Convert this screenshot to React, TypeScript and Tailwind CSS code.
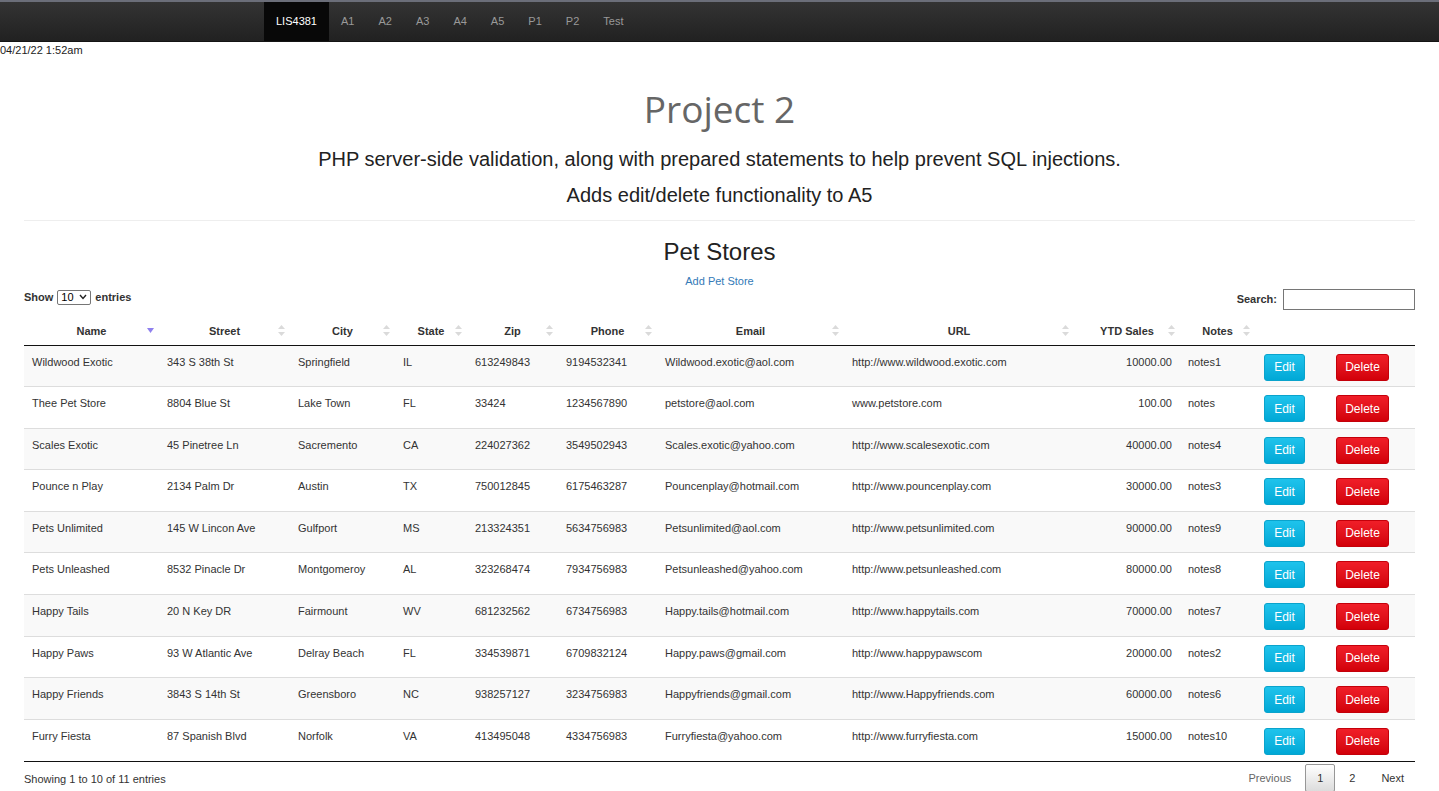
import React from 'react';

type Store = {
  name: string;
  street: string;
  city: string;
  state: string;
  zip: string;
  phone: string;
  email: string;
  url: string;
  ytd: string;
  notes: string;
};

const STORES: Store[] = [
  { name: 'Wildwood Exotic', street: '343 S 38th St', city: 'Springfield', state: 'IL', zip: '613249843', phone: '9194532341', email: 'Wildwood.exotic@aol.com', url: 'http://www.wildwood.exotic.com', ytd: '10000.00', notes: 'notes1' },
  { name: 'Thee Pet Store', street: '8804 Blue St', city: 'Lake Town', state: 'FL', zip: '33424', phone: '1234567890', email: 'petstore@aol.com', url: 'www.petstore.com', ytd: '100.00', notes: 'notes' },
  { name: 'Scales Exotic', street: '45 Pinetree Ln', city: 'Sacremento', state: 'CA', zip: '224027362', phone: '3549502943', email: 'Scales.exotic@yahoo.com', url: 'http://www.scalesexotic.com', ytd: '40000.00', notes: 'notes4' },
  { name: 'Pounce n Play', street: '2134 Palm Dr', city: 'Austin', state: 'TX', zip: '750012845', phone: '6175463287', email: 'Pouncenplay@hotmail.com', url: 'http://www.pouncenplay.com', ytd: '30000.00', notes: 'notes3' },
  { name: 'Pets Unlimited', street: '145 W Lincon Ave', city: 'Gulfport', state: 'MS', zip: '213324351', phone: '5634756983', email: 'Petsunlimited@aol.com', url: 'http://www.petsunlimited.com', ytd: '90000.00', notes: 'notes9' },
  { name: 'Pets Unleashed', street: '8532 Pinacle Dr', city: 'Montgomeroy', state: 'AL', zip: '323268474', phone: '7934756983', email: 'Petsunleashed@yahoo.com', url: 'http://www.petsunleashed.com', ytd: '80000.00', notes: 'notes8' },
  { name: 'Happy Tails', street: '20 N Key DR', city: 'Fairmount', state: 'WV', zip: '681232562', phone: '6734756983', email: 'Happy.tails@hotmail.com', url: 'http://www.happytails.com', ytd: '70000.00', notes: 'notes7' },
  { name: 'Happy Paws', street: '93 W Atlantic Ave', city: 'Delray Beach', state: 'FL', zip: '334539871', phone: '6709832124', email: 'Happy.paws@gmail.com', url: 'http://www.happypawscom', ytd: '20000.00', notes: 'notes2' },
  { name: 'Happy Friends', street: '3843 S 14th St', city: 'Greensboro', state: 'NC', zip: '938257127', phone: '3234756983', email: 'Happyfriends@gmail.com', url: 'http://www.Happyfriends.com', ytd: '60000.00', notes: 'notes6' },
  { name: 'Furry Fiesta', street: '87 Spanish Blvd', city: 'Norfolk', state: 'VA', zip: '413495048', phone: '4334756983', email: 'Furryfiesta@yahoo.com', url: 'http://www.furryfiesta.com', ytd: '15000.00', notes: 'notes10' },
];

const NAV = ['A1', 'A2', 'A3', 'A4', 'A5', 'P1', 'P2', 'Test'];

const COLS = [
  { label: 'Name', w: 'w-[135px]' },
  { label: 'Street', w: 'w-[131px]' },
  { label: 'City', w: 'w-[105px]' },
  { label: 'State', w: 'w-[72px]' },
  { label: 'Zip', w: 'w-[91px]' },
  { label: 'Phone', w: 'w-[99px]' },
  { label: 'Email', w: 'w-[187px]' },
  { label: 'URL', w: 'w-[230px]' },
  { label: 'YTD Sales', w: 'w-[106px]' },
  { label: 'Notes', w: 'w-[75px]' },
];

const SortBoth = () => (
  <svg width="7" height="11" viewBox="0 0 7 11" className="absolute right-[5px] top-[8px]">
    <path d="M3.5 0 L7 4 L0 4 Z" fill="#dadada" />
    <path d="M0 7 L7 7 L3.5 11 Z" fill="#dadada" />
  </svg>
);

const SortDesc = () => (
  <svg width="7" height="5" viewBox="0 0 7 5" className="absolute right-[5px] top-[11px]">
    <path d="M0 0 L7 0 L3.5 5 Z" fill="#8f80ee" />
  </svg>
);

export default function App() {
  return (
    <div className="min-h-screen bg-white text-[#333] font-['Liberation_Sans',Arial,sans-serif]">
      {/* navbar */}
      <div className="h-[42px] border-t-2 border-[#6b6e79] bg-gradient-to-b from-[#343434] to-[#212121] border-b border-b-[#141414] flex pl-[264px]">
        <div className="h-full px-3 flex items-center bg-[#080808] text-white text-[11px]">LIS4381</div>
        {NAV.map((n) => (
          <div key={n} className="h-full px-3 flex items-center text-[#999] text-[11px]">
            {n}
          </div>
        ))}
      </div>

      <div className="pt-[1px] text-[11px] leading-[14px] text-[#222]">04/21/22 1:52am</div>

      <div className="px-6">
        <h1 className="mt-[30px] text-center text-[37px] leading-[44px] text-[#666] font-['Open_Sans',sans-serif]">
          Project 2
        </h1>
        <h4 className="mt-[16px] text-center text-[20px] leading-[24px] text-[#222]">
          PHP server-side validation, along with prepared statements to help prevent SQL injections.
        </h4>
        <h4 className="mt-[12px] text-center text-[20px] leading-[24px] text-[#222]">
          Adds edit/delete functionality to A5
        </h4>
        <hr className="mt-[13px] border-0 border-t border-[#eeeeee]" />

        <h2 className="mt-[16px] text-center text-[24px] leading-[30px] text-[#222]">Pet Stores</h2>
        <div className="mt-[7px] text-center text-[11px] leading-[14px] text-[#337ab7]">Add Pet Store</div>

        {/* controls */}
        <div className="flex justify-between items-start h-[22px]">
          <div className="mt-[1px] flex items-center gap-1 text-[11px] font-bold text-[#333]">
            <span>Show</span>
            <span className="w-[34px] h-[15px] px-[3px] border border-[#767676] rounded-[2px] flex items-center justify-between font-normal text-[11px] text-black">
              10
              <svg width="8" height="6" viewBox="0 0 8 6">
                <path d="M1 1 L4 4.5 L7 1" stroke="#222" strokeWidth="1.4" fill="none" />
              </svg>
            </span>
            <span>entries</span>
          </div>
          <div className="flex items-center gap-[6px] mt-[1px]">
            <span className="text-[11px] font-bold text-[#333]">Search:</span>
            <div className="w-[132px] h-[21px] border border-[#767676] bg-white" />
          </div>
        </div>

        {/* table */}
        <table className="mt-[7px] w-full table-fixed border-collapse text-[11px]">
          <colgroup>
            {COLS.map((c) => (
              <col key={c.label} className={c.w} />
            ))}
            <col className="w-[73px]" />
            <col className="w-[87px]" />
          </colgroup>
          <thead>
            <tr className="h-[28px] border-b border-[#111]">
              {COLS.map((c, i) => (
                <th key={c.label} className="relative px-[18px] font-bold text-center text-[#333] whitespace-nowrap">
                  {c.label}
                  {i === 0 ? <SortDesc /> : <SortBoth />}
                </th>
              ))}
              <th />
              <th />
            </tr>
          </thead>
          <tbody>
            {STORES.map((s, i) => (
              <tr
                key={s.name}
                className={`h-[41.6px] ${i > 0 ? 'border-t border-[#dddddd]' : ''} ${i % 2 === 0 ? 'bg-[#f9f9f9]' : 'bg-white'}`}
              >
                <td className="align-top pt-[8px] pl-[8px] whitespace-nowrap">{s.name}</td>
                <td className="align-top pt-[8px] pl-[8px] whitespace-nowrap">{s.street}</td>
                <td className="align-top pt-[8px] pl-[8px] whitespace-nowrap">{s.city}</td>
                <td className="align-top pt-[8px] pl-[8px]">{s.state}</td>
                <td className="align-top pt-[8px] pl-[8px]">{s.zip}</td>
                <td className="align-top pt-[8px] pl-[8px]">{s.phone}</td>
                <td className="align-top pt-[8px] pl-[8px] whitespace-nowrap">{s.email}</td>
                <td className="align-top pt-[8px] pl-[8px] whitespace-nowrap">{s.url}</td>
                <td className="align-top pt-[8px] pr-[8px] text-right">{s.ytd}</td>
                <td className="align-top pt-[8px] pl-[8px]">{s.notes}</td>
                <td className="align-top pt-[8px] pl-[9px]">
                  <div className="w-[41px] h-[27px] rounded-[3px] border border-[#0aa3cc] bg-gradient-to-b from-[#1ec3ec] to-[#00a8d6] text-white text-[12px] flex items-center justify-center">
                    Edit
                  </div>
                </td>
                <td className="align-top pt-[8px] pl-[8px]">
                  <div className="w-[53px] h-[27px] rounded-[3px] border border-[#c4000a] bg-gradient-to-b from-[#f01e28] to-[#d20008] text-white text-[12px] flex items-center justify-center">
                    Delete
                  </div>
                </td>
              </tr>
            ))}
          </tbody>
        </table>
        <div className="border-t border-[#111]" />

        {/* footer */}
        <div className="flex justify-between">
          <div className="mt-[10px] text-[11px] leading-[14px] text-[#333]">Showing 1 to 10 of 11 entries</div>
          <div className="mt-[2px] flex items-start text-[11px] mr-[11px]">
            <span className="pr-[14px] h-[27px] flex items-center mt-[1px] text-[#666]">Previous</span>
            <span className="w-[30px] h-[28px] flex items-center justify-center border border-[#979797] rounded-[2px] bg-gradient-to-b from-white to-[#dcdcdc] text-[#333]">
              1
            </span>
            <span className="pl-[14px] pr-[26px] h-[27px] flex items-center mt-[1px] text-[#333]">2</span>
            <span className="h-[27px] flex items-center mt-[1px] text-[#333]">Next</span>
          </div>
        </div>
      </div>
    </div>
  );
}
